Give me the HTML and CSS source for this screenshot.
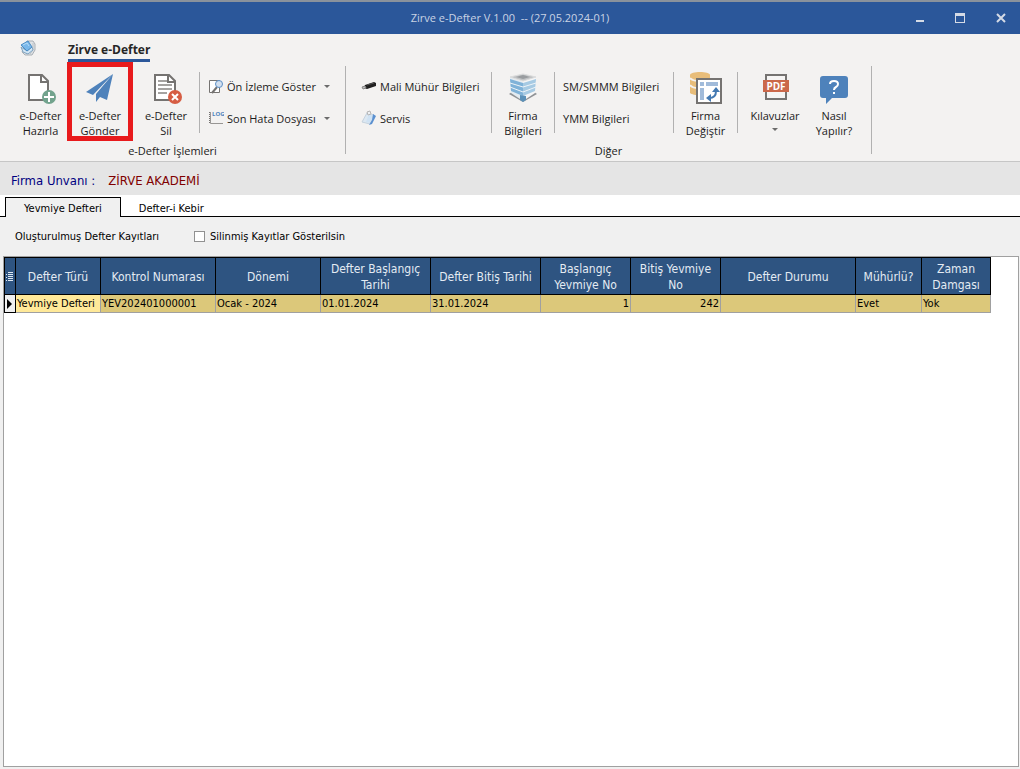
FILE: index.html
```html
<!DOCTYPE html>
<html lang="tr">
<head>
<meta charset="utf-8">
<title>Zirve e-Defter</title>
<link rel="stylesheet" href="styles.css">
</head>
<body>
<header class="titlebar">
  <h1 class="title">Zirve e-Defter V.1.00 &nbsp;-- (27.05.2024-01)</h1>
  <div class="window-controls">
    <button class="win-btn" aria-label="Küçült"><svg width="12" height="12" viewBox="0 0 12 12"><path d="M2 8h8v2H2z" fill="#d5dbe6"/></svg></button>
    <button class="win-btn" aria-label="Ekranı kapla"><svg width="12" height="12" viewBox="0 0 12 12"><path d="M1 1h10v10H1zM2 4v6h8V4z" fill="#d5dbe6" fill-rule="evenodd"/></svg></button>
    <button class="win-btn" aria-label="Kapat"><svg width="12" height="12" viewBox="0 0 12 12"><path d="M3 2l8 8M11 2l-8 8" stroke="#d5dbe6" stroke-width="2"/></svg></button>
  </div>
</header>

<section class="ribbon">
  <nav class="ribbon-tabs">
    <button class="app-btn" aria-label="Uygulama menüsü"><svg width="16" height="16" viewBox="0 0 16 16"><path d="M7 1h6l2 3v6l-3 5H5l-3-3z" fill="#dfe3e6" stroke="#a9afb5"/><path d="M13 3v7l-3 4" fill="none" stroke="#bcc1c6"/><path d="M1 7l2 5 5 2 5-4-1-3-5 4z" fill="#d2e6f5" stroke="#7fa3c0"/><path d="M1 5l7-4 4 6-5 4z" fill="#7ab8ea" stroke="#4b8dc5"/><path d="M3 5l4-2 2 3" fill="none" stroke="#b5dbf6"/></svg></button>
    <a class="ribbon-tab" href="#">Zirve e-Defter</a>
  </nav>
  <div class="ribbon-body">
    <div class="group">
      <div class="items items-main">
        <button class="big"><svg width="32" height="32" viewBox="0 0 32 32"><path d="M4 3h13l6 6v19H4z" fill="#fff" stroke="#757371" stroke-width="2"/><path d="M16 3v7h7" fill="none" stroke="#757371" stroke-width="2"/><circle cx="24" cy="25" r="7" fill="#72a38d"/><path d="M24 20v10M19 25h10" stroke="#fff" stroke-width="2"/></svg><span>e-Defter<br>Hazırla</span></button>
        <button class="big marked"><svg width="32" height="32" viewBox="0 0 32 32"><path d="M29 2L2 20l7 3zM29 2L12 22v8l4-5 7 3z" fill="#4e82bb"/></svg><span>e-Defter<br>Gönder</span></button>
        <button class="big"><svg width="32" height="32" viewBox="0 0 32 32"><path d="M5 3h14l6 6v19H5z" fill="#fff" stroke="#757371" stroke-width="2"/><path d="M18 3v7h7" fill="none" stroke="#757371" stroke-width="2"/><path d="M8 9h9M8 13h14M8 17h14M8 21h9" stroke="#a5a3a1" stroke-width="2"/><circle cx="25" cy="25" r="7" fill="#d65d43"/><path d="M22 22l6 6M28 22l-6 6" stroke="#fff" stroke-width="2"/></svg><span>e-Defter<br>Sil</span></button>
        <i class="divider"></i>
        <div class="stack">
          <button class="small"><svg width="16" height="16" viewBox="0 0 16 16"><path d="M1.500 2.500h10v12h-10z" fill="#fff" stroke="#757371"/><path d="M9 9l-5 6" stroke="#757371" stroke-width="2"/><circle cx="11" cy="6" r="3.500" fill="#d3e0ef" stroke="#5c8fc6"/></svg>Ön İzleme Göster<i class="caret"></i></button>
          <button class="small"><svg width="16" height="16" viewBox="0 0 16 16"><path d="M1.500 2v12" stroke="#757371" stroke-dasharray="1 1"/><path d="M2.500 2v11.500H15" fill="none" stroke="#989694"/><text x="4" y="6" class="log">LOG</text></svg>Son Hata Dosyası<i class="caret"></i></button>
        </div>
      </div>
      <div class="caption">e-Defter İşlemleri</div>
    </div>
    <i class="group-line"></i>
    <div class="group">
      <div class="items items-other">
        <div class="stack stack-wide">
          <button class="small"><svg width="16" height="16" viewBox="0 0 16 16"><path d="M4 7l9-3 2 1v3l-9 3-3-1z" fill="#202020"/><path d="M6 7l7-2" stroke="#555" fill="none"/><path d="M1 9l3-1 1 2-3 1z" fill="#bdbdbd" stroke="#888"/></svg>Mali Mühür Bilgileri</button>
          <button class="small"><svg width="16" height="16" viewBox="0 0 16 16"><path d="M6 3l7 2-4 9-8-2z" fill="#dce8f2" stroke="#c5d2de"/><path d="M8 4l5 2-4 7-4-1z" fill="#cfe2f3"/><path d="M12 4l3 2-4 8-3 1 3-5z" fill="#5a90d0"/><path d="M6 2l3-1 1 3-3 1z" fill="#edf0f3" stroke="#b5b5b5"/></svg>Servis</button>
        </div>
        <i class="divider"></i>
        <button class="big"><svg width="32" height="32" viewBox="0 0 32 32"><path d="M2 22l3-2h22l3 2-14 8z" fill="#8f9295"/><path d="M3 5l13 5v19L4 21z" fill="#e3ebf1"/><path d="M29 5l-13 5v19l12-8z" fill="#f5f6f7"/><path d="M3 7l13 4v13L4 19z" fill="#7fb2d8"/><path d="M29 7l-13 4v13l12-5z" fill="#a6cae3"/><path d="M3 11l13 4 13-4M3 15l13 5 13-5" fill="none" stroke="#eef4f8"/><path d="M3 5l13-3 13 3-13 4z" fill="#c0c2c4" stroke="#dcdddd"/><path d="M9 5l7-2 7 2-7 2z" fill="#999c9f"/><path d="M13 23l6 1v4l-3 2-3-2z" fill="#5b91b9"/></svg><span>Firma<br>Bilgileri</span></button>
        <i class="divider"></i>
        <div class="stack">
          <button class="small">SM/SMMM Bilgileri</button>
          <button class="small">YMM Bilgileri</button>
        </div>
        <i class="divider"></i>
        <button class="big"><svg width="32" height="32" viewBox="0 0 32 32"><path d="M0 3c0-4 20-4 20 0v18c-3 3-17 3-20 0z" fill="#e8bd79"/><path d="M0 6c2 3 7 3 10 3M0 13c2 3 5 3 8 3" fill="none" stroke="#f3f2f1" stroke-width="2"/><path d="M7 7h24v24H7z" fill="#fff" stroke="#757371" stroke-width="2"/><path d="M10 10h4v4h-4zM16 10h12v4H16zM10 16h4v12h-4z" fill="#a1bbda"/><path d="M19 26c5 0 7-2 7-7" fill="none" stroke="#4379b2" stroke-width="2"/><path d="M26 15l4 5h-8zM16 26l5-4v8z" fill="#4379b2"/></svg><span>Firma<br>Değiştir</span></button>
        <i class="divider"></i>
        <button class="big"><svg width="32" height="32" viewBox="0 0 32 32"><path d="M7 3h20v24H7z" fill="#f6f5f4" stroke="#757371" stroke-width="2"/><path d="M4 8h26v12H4z" fill="#cb684a"/><text x="17" y="18" class="pdf">PDF</text></svg><span>Kılavuzlar</span><i class="caret"></i></button>
        <button class="big"><svg width="32" height="32" viewBox="0 0 32 32"><path d="M5 4h22q3 0 3 3v16q0 3-3 3H14l-6 6v-6H5q-3 0-3-3V7q0-3 3-3z" fill="#4e82bb"/><path d="M12 12q0-3 4-3t4 3q0 2-2 3t-2 3" fill="none" stroke="#fff" stroke-width="2"/><path d="M15 20h2v2h-2z" fill="#fff"/></svg><span>Nasıl<br>Yapılır?</span></button>
      </div>
      <div class="caption">Diğer</div>
    </div>
    <i class="group-line"></i>
  </div>
</section>

<div class="company"><span>Firma Unvanı :</span><strong>ZİRVE AKADEMİ</strong></div>

<nav class="tabs">
  <button class="tab active">Yevmiye Defteri</button>
  <button class="tab">Defter-i Kebir</button>
</nav>

<main class="page">
  <div class="filters">
    <span>Oluşturulmuş Defter Kayıtları</span>
    <label class="check"><input type="checkbox">Silinmiş Kayıtlar Gösterilsin</label>
  </div>
  <div class="grid">
    <table>
      <colgroup><col class="w-mark"><col class="w-type"><col class="w-control"><col class="w-period"><col class="w-date"><col class="w-date"><col class="w-no"><col class="w-no"><col class="w-state"><col class="w-seal"><col class="w-stamp"></colgroup>
      <thead>
        <tr>
          <th><svg class="list-icon" width="8" height="10" viewBox="0 0 8 10"><path d="M0 2.500h1M0 5.500h1M0 8.500h1M2 .5h5M2 2.500h5M2 4.500h5M2 6.500h5M2 8.500h5" stroke="#dfe8f2"/></svg></th>
          <th>Defter Türü</th><th>Kontrol Numarası</th><th>Dönemi</th><th>Defter Başlangıç<br>Tarihi</th><th>Defter Bitiş Tarihi</th><th>Başlangıç<br>Yevmiye No</th><th>Bitiş Yevmiye<br>No</th><th>Defter Durumu</th><th>Mühürlü?</th><th>Zaman<br>Damgası</th>
        </tr>
      </thead>
      <tbody>
        <tr>
          <td class="marker"><svg width="6" height="10" viewBox="0 0 6 10"><path d="M0 0l5 5-5 5z" fill="#000"/></svg></td>
          <td class="focused">Yevmiye Defteri</td><td>YEV202401000001</td><td>Ocak - 2024</td><td>01.01.2024</td><td>31.01.2024</td><td class="num">1</td><td class="num">242</td><td></td><td>Evet</td><td>Yok</td>
        </tr>
      </tbody>
    </table>
  </div>
</main>
</body>
</html>
```
FILE: styles.css
```css
* { box-sizing: border-box; }

body {
  margin: 0;
  min-height: 100vh;
  display: flex;
  flex-direction: column;
  background: #f0f0f0;
  color: #000;
  font: 11px/14px "DejaVu Sans Condensed", "DejaVu Sans", sans-serif;
}

button {
  border: 0;
  padding: 0;
  background: none;
  color: inherit;
  font: inherit;
}

svg { display: block; flex: none; }

/* Title bar */
.titlebar {
  display: grid;
  grid-template-columns: 1fr auto 1fr;
  align-items: center;
  height: 34px;
  border-top: 2px solid #8a929c;
  background: #2b579a;
  color: #c9d3e4;
  font-family: "Open Sans", "Noto Sans", sans-serif;
}
.title { grid-column: 2; margin: 0; font-size: 11px; font-weight: 400; }
.window-controls { display: flex; justify-content: flex-end; }
.win-btn { width: 40px; height: 32px; display: grid; place-items: center; }

/* Ribbon */
.ribbon {
  padding-bottom: 3px;
  background: #f3f2f1;
  border-bottom: 1px solid #c6c6c6;
  color: #1c1c1c;
  font: 11px/15px "Open Sans", "Noto Sans", sans-serif;
}
.ribbon-tabs { display: flex; align-items: center; gap: 32px; height: 28px; padding-left: 20px; }
.ribbon-tab {
  flex: none;
  height: 28px;
  padding-top: 8px;
  border-bottom: 3px solid #2b579a;
  color: #262626;
  font-size: 12px;
  font-weight: 700;
  line-height: 16px;
  text-decoration: none;
}
.ribbon-body { display: flex; align-items: flex-start; padding-top: 4px; }
.group-line { width: 1px; height: 88px; background: #b1b1b1; }
.items { display: grid; height: 66px; margin-top: 6px; }
.items-main { grid-template-columns: 53px 66px 66px 1px 145px; padding-left: 14px; width: 345px; }
.items-other { grid-template-columns: 145px 1px 62px 1px 118px 1px 63px 1px 74px 44px; padding-right: 15px; }
.divider { height: 61px; background: #b1b1b1; }
.big { display: flex; flex-direction: column; align-items: center; text-align: center; white-space: nowrap; }
.big span { margin-top: 4px; }
.big .caret { margin-top: 5px; }
.marked { position: relative; }
.marked::after {
  content: "";
  position: absolute;
  inset: -10px 0 -3px;
  border: 5px solid #e81a1c;
}
.stack { display: flex; flex-direction: column; gap: 16px; padding: 6px 0 0 8px; }
.stack-wide { padding-left: 15px; }
.small { display: flex; align-items: center; gap: 3px; height: 16px; white-space: nowrap; }
.caret {
  border: 3px solid transparent;
  border-top-color: #6b6b6b;
  border-bottom-width: 0;
}
.small .caret { margin-left: 5px; }
.caption { margin-top: 5px; text-align: center; }
.log { font: 700 6px "Open Sans", sans-serif; fill: #4e82bb; }
.pdf { font: 700 10px "Open Sans", sans-serif; fill: #fff; text-anchor: middle; }

/* Company strip */
.company {
  display: flex;
  align-items: center;
  gap: 13px;
  height: 33px;
  padding: 9px 11px 4px;
  background: #e5e5e5;
  color: #000080;
  font-size: 13px;
  line-height: 20px;
}
.company strong { color: #800000; font-weight: 400; }

/* Page tabs */
.tabs { display: flex; align-items: flex-end; height: 22px; padding-left: 5px; background: #fff; box-shadow: inset 0 -1px #000; }
.tab { height: 20px; padding: 4px 18px 0; }
.tab.active { padding-top: 3px; border: 1px solid #000; border-bottom: 0; background: #f0f0f0; }

/* Records */
.page { flex: 1; display: flex; flex-direction: column; padding: 0 1px 2px 3px; }
.filters { display: flex; align-items: center; gap: 35px; height: 39px; padding-left: 12px; }
.check { display: flex; align-items: center; gap: 5px; }
.check input { appearance: none; width: 11px; height: 11px; margin: 0; border: 1px solid #919191; background: #fff; }
.grid { flex: 1; border: 1px solid #a0a0a0; background: #fff; }
table { border-collapse: separate; border-spacing: 0; table-layout: fixed; width: 987px; }
.w-mark { width: 12px; }
.w-type { width: 85px; }
.w-control { width: 115px; }
.w-period { width: 105px; }
.w-date { width: 110px; }
.w-no { width: 90px; }
.w-state { width: 135px; }
.w-seal { width: 66px; }
.w-stamp { width: 69px; }
th {
  height: 38px;
  padding: 1px 0 0;
  border: solid #000;
  border-width: 1px 1px 1px 0;
  background: #2e5481;
  color: #e4ebf3;
  font-size: 12px;
  font-weight: 400;
  line-height: 16px;
  white-space: nowrap;
}
th:first-child, .marker { border-left: 1px solid #000; }
.list-icon { margin: 0 auto; }
td {
  height: 18px;
  padding: 1px 1px 0;
  border: solid #a0a0a0;
  border-width: 0 1px 1px 0;
  background: #dcc87a;
  white-space: nowrap;
}
td.marker { background: #f0f0f0; border-color: #000; padding: 0 2px; }
td.focused { background: #ffe999; }
.num { text-align: right; }
```
